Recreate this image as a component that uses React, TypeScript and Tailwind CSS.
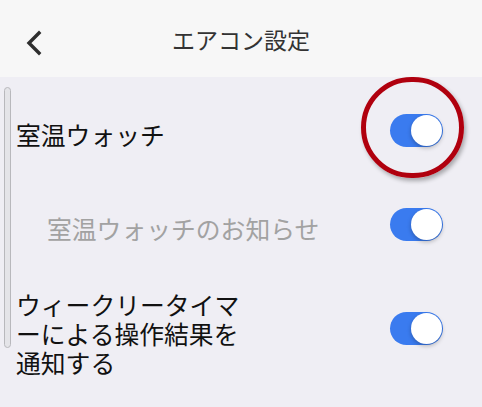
import React from 'react';

const Toggle: React.FC = () => (
  <div className="relative w-[53px] h-[33px] rounded-full bg-[#3a7bef] shrink-0">
    <div className="absolute right-[1px] top-[1px] w-[31px] h-[31px] rounded-full bg-white shadow-[0_2px_4px_rgba(0,0,0,0.25)]" />
  </div>
);

const App: React.FC = () => {
  return (
    <div
      className="w-[482px] h-[407px] bg-[#efeef4] overflow-hidden relative"
      style={{ fontFamily: '"Noto Sans CJK JP", "Noto Sans", sans-serif' }}
    >
      {/* Header */}
      <div className="h-[77px] bg-[#f7f7f7] flex items-center relative">
        <div className="w-[70px] pl-[24px] pt-[9px] flex items-center">
          <svg width="20" height="26" viewBox="0 0 20 26" fill="none">
            <path d="M15 3 L5 13 L15 23" stroke="#2e2e2e" strokeWidth="3.4" strokeLinecap="square" />
          </svg>
        </div>
        <div className="flex-1 text-center pr-[70px] text-[23px] text-[#333] pt-[1px]">エアコン設定</div>
      </div>

      {/* Scroll indicator */}
      <div className="absolute left-[4px] top-[87px] w-[7px] h-[261px] rounded-full bg-[#e4e4e8] border border-[#b8b8bc]" />

      {/* Rows */}
      <div className="flex flex-col">
        <div className="h-[107px] flex items-center justify-between pl-[16px] pr-[39px]">
          <span className="text-[24.8px] text-[#111] pt-[8px]">室温ウォッチ</span>
          <Toggle />
        </div>
        <div className="h-[81px] flex items-center justify-between pl-[47px] pr-[39px]">
          <span className="text-[24.8px] text-[#a2a2a2] pt-[8px]">室温ウォッチのお知らせ</span>
          <Toggle />
        </div>
        <div className="h-[126px] flex items-center justify-between pl-[16px] pr-[39px]">
          <span className="w-[236px] text-[24.8px] leading-[29px] text-[#111] pt-[10px]">
            ウィークリータイマーによる操作結果を通知する
          </span>
          <Toggle />
        </div>
      </div>

      {/* Annotation circle */}
      <div className="absolute left-[361px] top-[77px] w-[103px] h-[101px] rounded-full border-[5px] border-[#b0000e] shadow-[2px_3px_4px_rgba(0,0,0,0.3)]" />
    </div>
  );
};

export default App;
